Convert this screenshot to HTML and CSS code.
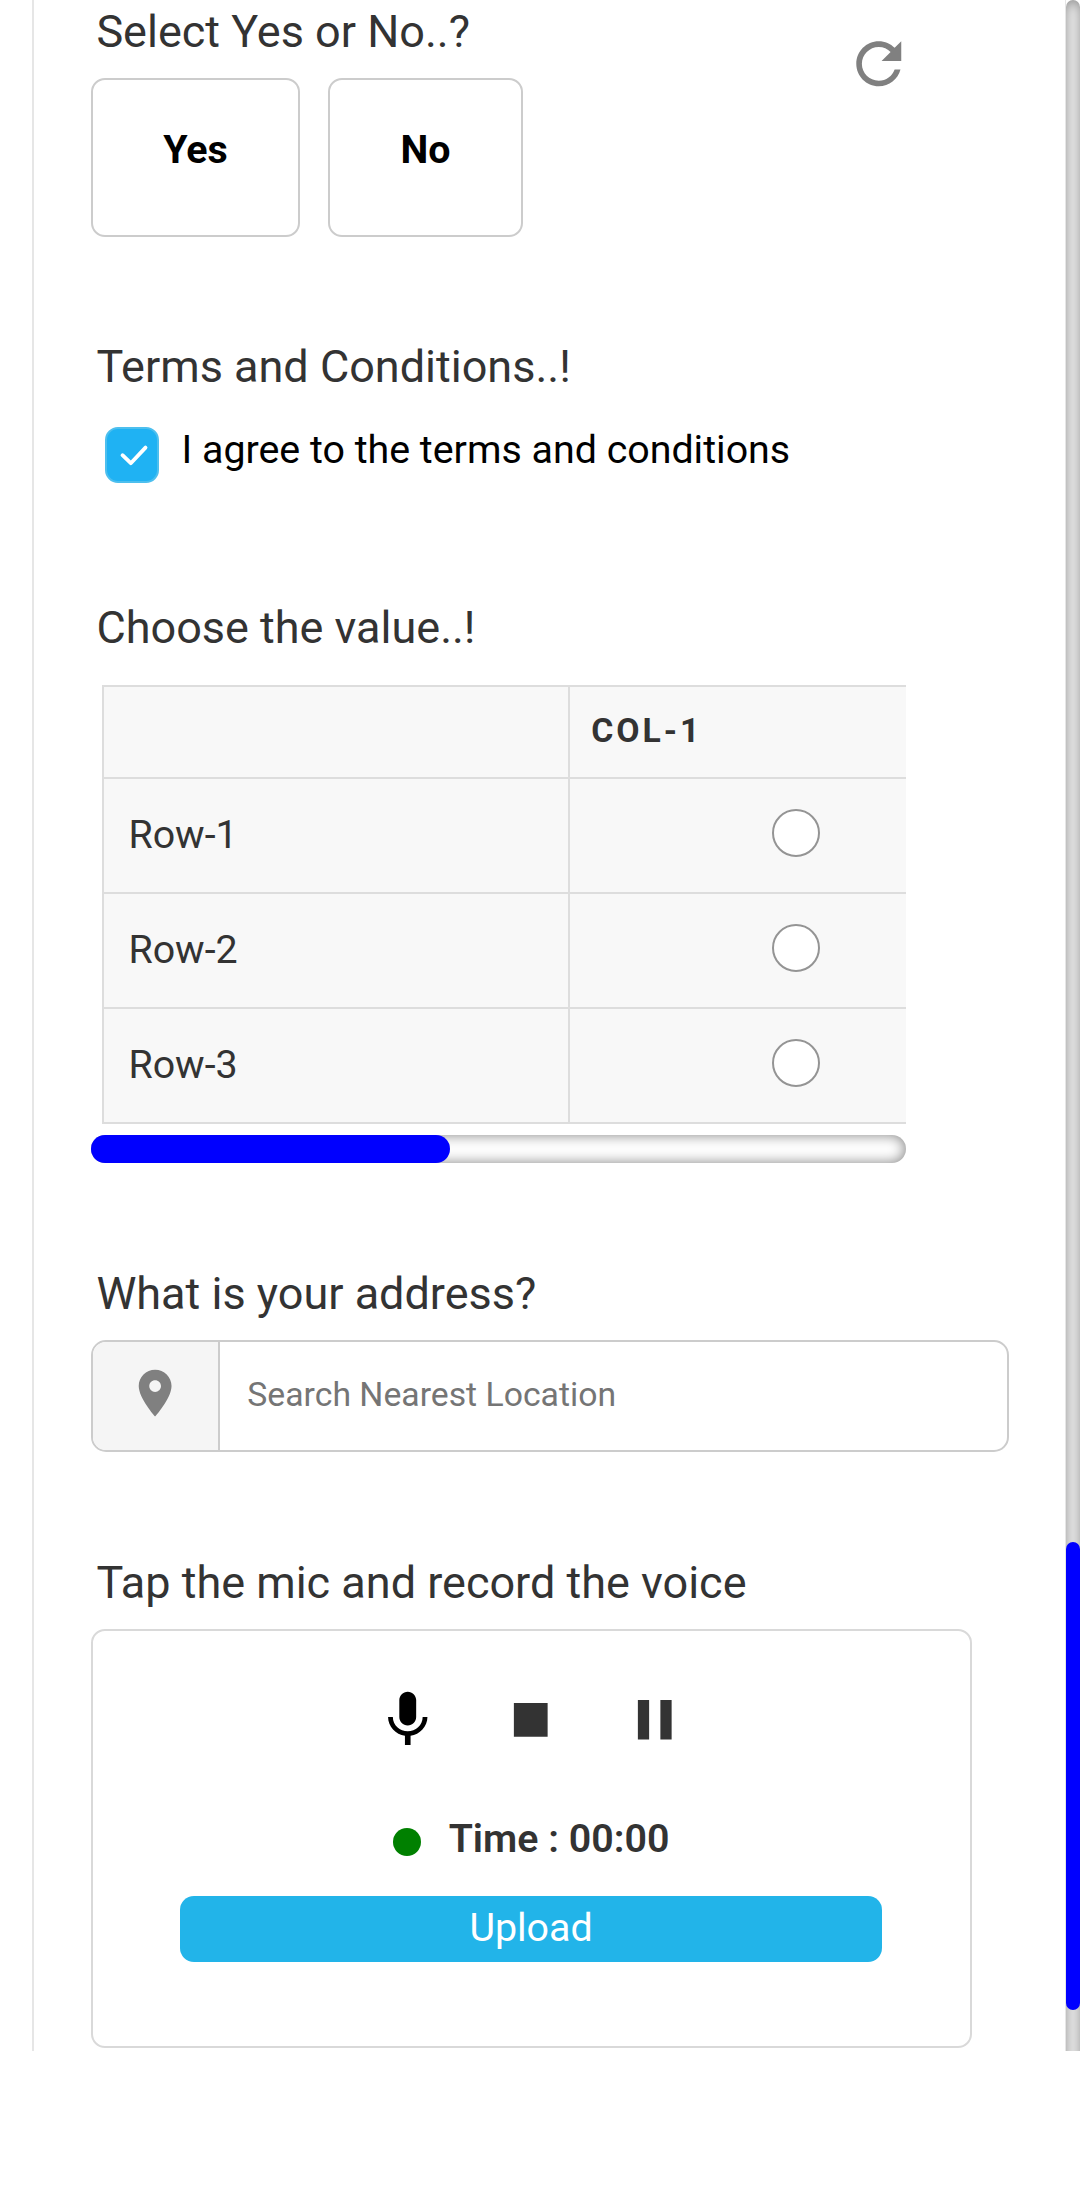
FILE: index.html
```html
<!DOCTYPE html>
<html lang="en">
<head>
<meta charset="utf-8">
<title>Form</title>
<link rel="stylesheet" href="styles.css">
</head>
<body>
<div class="screen">
  <main class="form">
    <section class="question question-choice">
      <div>
        <h2 class="label">Select Yes or No..?</h2>
        <div class="choices">
          <button class="choice choice-yes">Yes</button>
          <button class="choice choice-no">No</button>
        </div>
      </div>
      <svg class="refresh" viewBox="0 0 24 24"><path d="M17.65 6.35C16.2 4.9 14.21 4 12 4c-4.42 0-7.99 3.58-7.99 8s3.57 8 7.99 8c3.73 0 6.84-2.55 7.73-6h-2.08c-.82 2.33-3.04 4-5.65 4-3.31 0-6-2.69-6-6s2.69-6 6-6c1.66 0 3.14.69 4.22 1.78L13 11h7V4l-2.35 2.35z"/></svg>
    </section>

    <section class="question question-terms">
      <h2 class="label">Terms and Conditions..!</h2>
      <div class="agree">
        <span class="checkbox"><svg class="check" viewBox="0 0 50 52"><path d="M15.5 26.2l8.3 8L38.5 18.6"/></svg></span>
        <span class="agree-text">I agree to the terms and conditions</span>
      </div>
    </section>

    <section class="question question-grid">
      <h2 class="label">Choose the value..!</h2>
      <div class="grid-view">
        <table class="grid">
          <colgroup><col class="col-name"><col class="col-value"></colgroup>
          <tr class="head"><th></th><th>COL-1</th></tr>
          <tr><td class="name">Row-1</td><td class="pick"><span class="radio"></span></td></tr>
          <tr><td class="name">Row-2</td><td class="pick"><span class="radio"></span></td></tr>
          <tr><td class="name">Row-3</td><td class="pick"><span class="radio"></span></td></tr>
        </table>
      </div>
      <div class="hbar"><div class="hbar-thumb"></div></div>
    </section>

    <section class="question question-address">
      <h2 class="label">What is your address?</h2>
      <div class="search">
        <div class="search-icon"><svg class="pin" viewBox="0 0 24 24"><path d="M12 2C8.13 2 5 5.13 5 9c0 5.25 7 13 7 13s7-7.75 7-13c0-3.87-3.13-7-7-7zm0 9.5c-1.38 0-2.5-1.12-2.5-2.5s1.12-2.5 2.5-2.5 2.5 1.12 2.5 2.5-1.12 2.5-2.5 2.5z"/></svg></div>
        <div class="search-text">Search Nearest Location</div>
      </div>
    </section>

    <section class="question question-voice">
      <h2 class="label">Tap the mic and record the voice</h2>
      <div class="recorder">
        <div class="controls">
          <svg class="control mic" viewBox="0 0 24 24"><path d="M12 14c1.66 0 2.99-1.34 2.99-3L15 5c0-1.66-1.34-3-3-3S9 3.34 9 5v6c0 1.66 1.34 3 3 3zm5.3-3c0 3-2.54 5.1-5.3 5.1S6.7 14 6.7 11H5c0 3.41 2.72 6.23 6 6.72V21h2v-3.28c3.28-.48 6-3.3 6-6.72h-1.7z"/></svg>
          <svg class="control" viewBox="0 0 24 24"><path d="M6 6h12v12H6z"/></svg>
          <svg class="control" viewBox="0 0 24 24"><path d="M6 19h4V5H6v14zm8-14v14h4V5h-4z"/></svg>
        </div>
        <div class="timer"><span class="dot"></span><span class="time">Time : 00:00</span></div>
        <button class="upload">Upload</button>
      </div>
    </section>
  </main>
  <div class="vbar"><div class="vbar-thumb"></div></div>
</div>
</body>
</html>
```
FILE: styles.css
```css
* { box-sizing: border-box; }

body {
  margin: 0;
  background: #fff;
  color: #333;
  font-family: Roboto, "Liberation Sans", sans-serif;
  font-size: 39.375px;
  line-height: 46px;
}

svg { display: block; }

.screen {
  display: flex;
  height: 2051px;
  padding-left: 32px;
  overflow: hidden;
}

.form {
  flex: 1;
  padding: 6px 0 0 57px;
  border-left: 2px solid #e6e6e6;
  border-right: 1px solid #e6e6e6;
}

.label {
  margin: 0;
  padding-left: 5.4px;
  font-size: 45px;
  font-weight: 400;
  line-height: 52px;
  white-space: nowrap;
}

/* Yes / No */
.question-choice {
  display: flex;
  justify-content: space-between;
  width: 821px;
}

.choices {
  display: flex;
  gap: 28px;
  margin-top: 20px;
}

.choice {
  height: 159px;
  padding: 0 0 15px;
  border: 2px solid #ccc;
  border-radius: 14px;
  background: #fff;
  color: #000;
  font: 700 39.375px/46px Roboto, sans-serif;
}

.choice-yes { width: 209px; }
.choice-no { width: 195px; }

.refresh {
  width: 67.5px;
  height: 67.5px;
  margin-top: 24px;
  fill: #808080;
}

/* Terms */
.question-terms { margin-top: 104px; }

.agree {
  display: flex;
  gap: 22.5px;
  margin: 34px 0 0 14px;
  color: #000;
}

.checkbox {
  width: 54px;
  height: 56px;
  border: 2px solid #4dbfee;
  border-radius: 13px;
  background: #1fb2f3;
}

.check {
  width: 50px;
  height: 52px;
  fill: none;
  stroke: #fff;
  stroke-width: 3.8;
  stroke-linecap: round;
  stroke-linejoin: round;
}

/* Value grid */
.question-grid {
  width: 815px;
  margin-top: 119px;
}

.grid-view {
  margin: 31px 0 0 11px;
  overflow: hidden;
}

.grid {
  width: 922px;
  border-collapse: collapse;
  table-layout: fixed;
}

.col-name { width: 466px; }

.grid tr { height: 115px; }
.grid .head { height: 92px; }

.grid th,
.grid td {
  padding: 0;
  border: 2px solid #ddd;
  background: #f8f8f8;
  vertical-align: middle;
}

.grid th {
  padding: 0 0 2px 21.2px;
  font-size: 33.75px;
  font-weight: 700;
  letter-spacing: 3px;
  text-align: left;
}

.grid .name { padding: 0 0 2px 24.4px; }
.grid .pick { padding-bottom: 5px; }

.radio {
  display: block;
  width: 48px;
  height: 48px;
  margin: 0 auto;
  border: 2px solid #949494;
  border-radius: 50%;
  background: #fff;
}

.hbar {
  height: 28px;
  margin-top: 11px;
  border-radius: 14px;
  background: #fff;
  box-shadow: inset 0 0 14px #808080;
}

.hbar-thumb {
  width: 359px;
  height: 28px;
  border-radius: 14px;
  background: #00f;
}

/* Address */
.question-address { margin-top: 105px; }

.search {
  display: flex;
  width: 918px;
  height: 112px;
  margin-top: 20px;
  overflow: hidden;
  border: 2px solid #ccc;
  border-radius: 15px;
}

.search-icon {
  width: 127px;
  padding: 22.6px 0 0 34px;
  border-right: 2px solid #ccc;
  background: #f5f5f5;
}

.pin {
  width: 56.25px;
  height: 56.25px;
  fill: #808080;
}

.search-text {
  padding: 30px 0 0 27.3px;
  color: #757575;
  font-size: 33.75px;
}

/* Voice recorder */
.question-voice { margin-top: 105px; }

.recorder {
  display: flex;
  flex-direction: column;
  align-items: center;
  width: 881px;
  height: 419px;
  margin-top: 20px;
  padding: 55px 1px 0 0;
  border: 2px solid #d9d9d9;
  border-radius: 14px;
}

.controls {
  display: flex;
  gap: 56px;
}

.control {
  width: 67.5px;
  height: 67.5px;
  fill: #333;
}

.mic { fill: #000; }

.timer {
  display: flex;
  align-items: center;
  gap: 28px;
  margin-top: 62.5px;
  font-weight: 600;
}

.dot {
  width: 28px;
  height: 28px;
  margin-top: 6px;
  border-radius: 50%;
  background: #008000;
}

.upload {
  width: 702px;
  height: 66px;
  margin-top: 34px;
  padding: 0 0 2px;
  border: 0;
  border-radius: 14px;
  background: #22b4e9;
  color: #fff;
  font: 400 39.375px/46px Roboto, sans-serif;
}

/* Page scrollbar, running on past the bottom of the view */
.vbar {
  width: 14px;
  height: 2080px;
  padding-top: 1542px;
  border-radius: 14px;
  background: #fff;
  box-shadow: inset 0 0 14px #808080;
}

.vbar-thumb {
  height: 468px;
  border-radius: 14px;
  background: #00f;
}
```
